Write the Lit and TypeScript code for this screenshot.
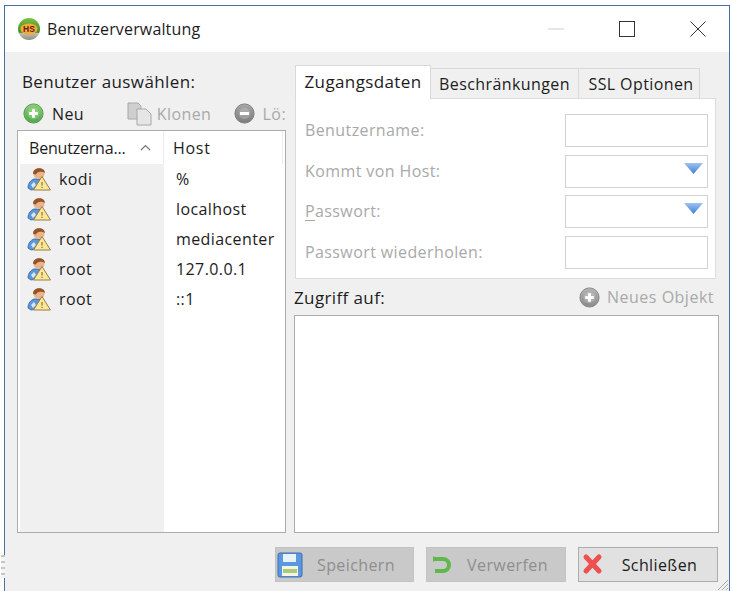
import { LitElement, html, css, svg } from "lit";
import { customElement } from "lit/decorators.js";

const userIcon = html`<svg class="uicon" width="24" height="24" viewBox="0 0 24 24">
  <path d="M1 21 C1 16 4 13 7 12 L13 12 L10 22 L4 23 Z" fill="#5b97da" stroke="#2f5f9a" stroke-width=".8"/>
  <path d="M4 18 L7 15 L9 18 L6 21 Z" fill="#d8e8f8"/>
  <circle cx="12" cy="6.5" r="5.6" fill="#e9b48c"/>
  <path d="M6.2 7 C5 0 18 -1 18 6 C15 4 10 4 9 7.5 Z" fill="#93542a"/>
  <path d="M15 9.5 L23.5 23 L6.5 23 Z" fill="#fbe79a" stroke="#9a7d45" stroke-width="1"/>
  <path d="M15 15 V18.6 M15 19.8 V21" stroke="#8a6a20" stroke-width="1.1"/>
</svg>`;

const circle = (top: string, bottom: string, line: string, mark: boolean) => html`<svg width="21" height="21" viewBox="0 0 21 21">
  <defs><linearGradient id="c${top.slice(1)}" x1="0" y1="0" x2="0" y2="1"><stop offset="0" stop-color=${top}/><stop offset="1" stop-color=${bottom}/></linearGradient></defs>
  <circle cx="10.5" cy="10.5" r="9.6" fill="url(#c${top.slice(1)})" stroke=${line} stroke-width="1"/>
  <circle cx="10.5" cy="10.5" r="5.8" fill="#fff" opacity=".18"/>
  ${mark ? svg`<path d="M10.5 6.2 V14.8 M6.2 10.5 H14.8" stroke="#fff" stroke-width="3"/>` : svg`<path d="M6 10.5 H15" stroke="#fff" stroke-width="3"/>`}
</svg>`;

@customElement("app-root")
export class AppRoot extends LitElement {
  static styles = css`
    :host { display: block; height: 591px; background: #fdfdfd; padding: 5px 2px 0 4px; box-sizing: border-box; overflow: hidden;
      font-family: "Open Sans", "Noto Sans", sans-serif; font-size: 16px; letter-spacing: .4px; color: #1c1c1c; }
    * { box-sizing: border-box; }
    .window { height: 586px; border: 1px solid #4a6fa5; border-bottom: 0; background: #f0f0f0; display: flex; flex-direction: column; position: relative; white-space: nowrap; }
    .title { height: 46px; flex: none; background: #fff; display: flex; align-items: center; padding-left: 11px; }
    .title .name { margin-left: 5px; letter-spacing: .15px; }
    .logo { flex: none; }
    .controls { margin-left: auto; display: flex; align-items: center; }
    .ctl { width: 71px; height: 30px; display: flex; align-items: center; justify-content: center; }
    .ctl.max { margin-right: 5px; }
    .ctl.last { width: 62px; }
    .content { flex: none; display: grid; grid-template-columns: 269px 425px; column-gap: 8px; padding: 13px 10px 0 12px; height: 481px; }
    .left, .right { display: flex; flex-direction: column; min-height: 0; }
    .big { font-size: 17px; letter-spacing: .38px; }
    .pick { height: 32px; display: flex; align-items: center; padding-left: 5px; }
    .tools { height: 33px; display: flex; align-items: center; position: relative; color: #a9a9a9; }
    .tool { display: flex; align-items: center; }
    .tool.new { margin-left: 6px; width: 105px; color: #1c1c1c; gap: 8px; }
    .tool.clone { width: 108px; gap: 5px; }
    .tool.del { gap: 8px; }
    .list { flex: 1; border: 1px solid #acacac; background: #fff; display: flex; flex-direction: column; min-height: 0; }
    .row { display: grid; grid-template-columns: 146px 1fr; }
    .head { height: 33px; flex: none; }
    .head > div { display: flex; align-items: center; }
    .head .a { padding-left: 11px; border-right: 1px solid #ececec; position: relative; letter-spacing: -.2px; }
    .head .b { padding-left: 9px; margin-right: 2px; border-right: 1px solid #ececec; letter-spacing: .7px; }
    .caret { position: absolute; left: 122px; top: 13px; }
    .rows { flex: 1; display: flex; flex-direction: column; padding-left: 2px; }
    .item { height: 30px; flex: none; grid-template-columns: 144px 1fr; }
    .item .u { background: #f0f0f0; display: flex; align-items: center; padding-left: 7px; gap: 8px; }
    .item .h { display: flex; align-items: center; padding-left: 12px; }
    .item span, .item .h { padding-bottom: 1px; }
    .fill { flex: 1; grid-template-columns: 144px 1fr; }
    .fill .u { background: #f0f0f0; }
    .tabs { display: flex; align-items: flex-end; height: 33px; margin-left: 1px; }
    .tab { height: 30px; background: #f0f0f0; border: 1px solid #d9d9d9; border-bottom: 0; display: flex; align-items: center; justify-content: center; border-left: 0; }
    .tab.on { height: 34px; margin-bottom: -1px; background: #fff; border-left: 1px solid #d9d9d9; width: 136px; position: relative; z-index: 1; padding-bottom: 3px; }
    .tab.t2 { width: 148px; }
    .tab.t3 { width: 121px; padding-left: 4px; }
    .panel { margin-left: 1px; width: 421px; height: 181px; background: #fff; border: 1px solid #dcdcdc; padding: 15px 7px 0 9px; display: flex; flex-direction: column; gap: 7.6px; color: #a9a9a9; }
    .field { display: flex; align-items: center; justify-content: space-between; height: 33px; }
    .field > span { padding-bottom: 1px; }
    .box { width: 143px; height: 33px; border: 1px solid #d2d2d2; background: #fff; display: flex; align-items: flex-start; justify-content: flex-end; padding: 7px 4px 0 0; }
    .u1 { text-decoration: underline; text-underline-offset: 3px; text-decoration-thickness: 1px; }
    .access { height: 36px; display: flex; align-items: center; justify-content: space-between; padding-right: 5px; }
    .access .obj { display: flex; align-items: center; gap: 7px; color: #a9a9a9; letter-spacing: .5px; }
    .tree { flex: 1; background: #fff; border: 1px solid #acacac; }
    .foot { margin-top: 14px; display: flex; justify-content: flex-end; gap: 12px; padding-right: 11px; }
    .btn { width: 140px; height: 35px; background: #c9c9c9; border: 1px solid #c2c2c2; color: #8e8e8e; display: flex; align-items: center; padding-left: 1px; }
    .btn.first { width: 139px; }
    .btn svg { flex: none; }
    .btn .lbl { flex: 1; text-align: center; padding-right: 8px; }
    .btn.on { background: #e1e1e1; border-color: #adadad; color: #1c1c1c; }
    .grip { position: absolute; right: 0; bottom: 0; }
    .ticks { position: absolute; left: -4px; top: 549px; width: 4px; height: 23px;
      background: repeating-linear-gradient(#c6c6c6 0 2px, #f4f4f4 2px 6px); }
  `;

  render() {
    const users: [string, string][] = [["kodi", "%"], ["root", "localhost"], ["root", "mediacenter"], ["root", "127.0.0.1"], ["root", "::1"]];
    const arrow = html`<svg width="19" height="11" viewBox="0 0 19 11"><defs><linearGradient id="ar" x1="0" y1="0" x2="0" y2="1"><stop offset="0" stop-color="#9cc2f0"/><stop offset="1" stop-color="#3f7fd8"/></linearGradient></defs><path d="M0 0 H19 L9.5 11 Z" fill="url(#ar)"/></svg>`;
    return html`<div class="window">
      <div class="ticks"></div>
      <div class="title">
        <svg class="logo" width="26" height="24" viewBox="0 0 26 24">
          <defs><linearGradient id="lg" x1="0" y1="0" x2="0" y2="1"><stop offset="0" stop-color="#7fc040"/><stop offset=".65" stop-color="#3f8f28"/><stop offset=".7" stop-color="#c0c0b0"/><stop offset="1" stop-color="#8d8d80"/></linearGradient></defs>
          <circle cx="13" cy="12" r="11" fill="url(#lg)"/>
          <ellipse cx="13" cy="12" rx="8.6" ry="5.6" fill="#f2a93a"/>
          <text x="13" y="15.2" text-anchor="middle" font-family="Liberation Sans" font-size="8.5" font-weight="700" letter-spacing="0" fill="#6a1c10">HS</text>
        </svg>
        <span class="name">Benutzerverwaltung</span>
        <div class="controls">
          <div class="ctl"><svg width="16" height="2" viewBox="0 0 16 2"><path d="M0 1 H16" stroke="#cfcfcf"/></svg></div>
          <div class="ctl max"><svg width="16" height="16" viewBox="0 0 16 16"><rect x=".5" y=".5" width="15" height="15" fill="none" stroke="#333"/></svg></div>
          <div class="ctl last"><svg width="16" height="16" viewBox="0 0 16 16"><path d="M.5 .5 L15.5 15.5 M15.5 .5 L.5 15.5" stroke="#333" fill="none"/></svg></div>
        </div>
      </div>
      <div class="content">
        <div class="left">
          <div class="pick big">Benutzer auswählen:</div>
          <div class="tools">
            <div class="tool new">${circle("#8ed07a", "#4fa84a", "#5c9c58", true)}<span>Neu</span></div>
            <div class="tool clone">
              <svg width="25" height="24" viewBox="0 0 25 24"><path d="M1 1 H11 L14 4 V17 H1 Z" fill="#cfcfcf" stroke="#a8a8a8"/><path d="M10 7 H19 L24 12 V23 H10 Z" fill="#e6e6e6" stroke="#a8a8a8"/></svg>
              <span>Klonen</span>
            </div>
            <div class="tool del">${circle("#a6a6a6", "#7d7d7d", "#808080", false)}<span>Lö:</span></div>
          </div>
          <div class="list">
            <div class="row head">
              <div class="a">Benutzerna...
                <svg class="caret" width="11" height="7" viewBox="0 0 11 7"><path d="M1 6 L5.5 1.5 L10 6" fill="none" stroke="#777" stroke-width="1.2"/></svg>
              </div>
              <div class="b">Host</div>
            </div>
            <div class="rows">
              ${users.map(([u, h]) => html`<div class="row item"><div class="u">${userIcon}<span>${u}</span></div><div class="h">${h}</div></div>`)}
              <div class="row fill"><div class="u"></div><div></div></div>
            </div>
          </div>
        </div>
        <div class="right">
          <div class="tabs">
            <div class="tab on big">Zugangsdaten</div>
            <div class="tab t2">Beschränkungen</div>
            <div class="tab t3">SSL Optionen</div>
          </div>
          <div class="panel">
            <div class="field"><span>Benutzername:</span><div class="box"></div></div>
            <div class="field"><span>Kommt von Host:</span><div class="box">${arrow}</div></div>
            <div class="field"><span><span class="u1">P</span>asswort:</span><div class="box">${arrow}</div></div>
            <div class="field"><span>Passwort wiederholen:</span><div class="box"></div></div>
          </div>
          <div class="access"><span class="big">Zugriff auf:</span><span class="obj">${circle("#b5b5b5", "#8a8a8a", "#8a8a8a", true)}Neues Objekt</span></div>
          <div class="tree"></div>
        </div>
      </div>
      <div class="foot">
        <div class="btn first"><svg width="30" height="26" viewBox="0 0 30 26"><rect x="1" y="1" width="24" height="24" rx="2" fill="#5c98e0" stroke="#3a6fb0"/><rect x="6" y="2" width="13" height="8" fill="#e8f2fb"/><rect x="5" y="14" width="16" height="10" fill="#f4f4e8"/><rect x="6" y="17" width="14" height="4" fill="#a6cc78"/></svg><span class="lbl">Speichern</span></div>
        <div class="btn"><svg width="30" height="26" viewBox="0 0 30 26"><path d="M6 7 H15 A6 6 0 0 1 15 19 H7" fill="none" stroke="#5fb84a" stroke-width="4"/><path d="M5 4 L9 7 L5 10 Z" fill="#5fb84a"/></svg><span class="lbl">Verwerfen</span></div>
        <div class="btn on"><svg width="30" height="26" viewBox="0 0 30 26"><path d="M6 5 L19 19 M19 5 L6 19" stroke="#ee4f4f" stroke-width="5" stroke-linecap="round"/></svg><span class="lbl">Schließen</span></div>
      </div>
      <svg class="grip" width="14" height="14" viewBox="0 0 14 14"><path d="M13 3 L3 13 M13 7 L7 13 M13 11 L11 13" stroke="#a8a8a8" fill="none"/></svg>
    </div>`;
  }
}
